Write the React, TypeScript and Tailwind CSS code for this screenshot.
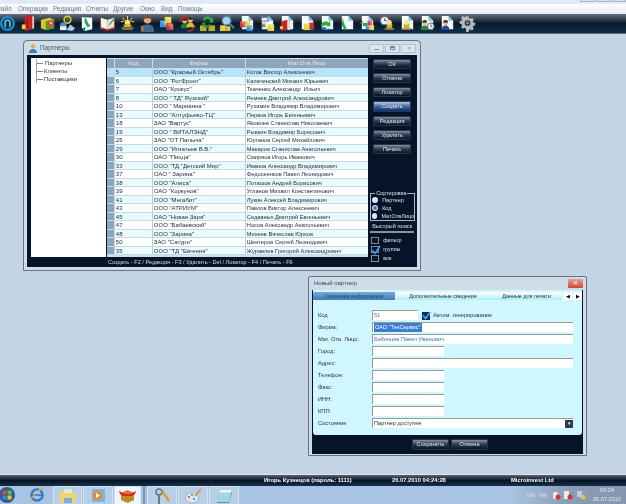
import React from "react";

const rows: [string, string, string][] = [
  ["5", 'ООО "Красный Октябрь"', "Котов Виктор Алексеевич"],
  ["6", 'ООО "РотФронт"', "Калачинский Михаил Юрьевич"],
  ["7", 'ОАО "Крокус"', "Ткаченко Александр  Ильич"],
  ["8", 'ООО " ТД" Яузский"', "Ремнев Дмитрий Александрович"],
  ["10", 'ООО " Марианна "', "Рухамин Владимир Владимирович"],
  ["13", 'ООО "Алтуфьево-ТЦ"', "Первов Игорь Евгеньевич"],
  ["18", 'ЗАО "Вартус"', "Яковлев Станислав Николаевич"],
  ["19", 'ООО " ВИТАЛЭНД"', "Рывкин Владимир Борисович"],
  ["25", 'ЗАО "ОТ Палыча"', "Юрганов Сергей Михайлович"],
  ["29", 'ООО "Игнатьев В.В."', "Макаров Станислав Анатольевич"],
  ["30", 'ОАО "Пицца"', "Смирнов Игорь Иванович"],
  ["33", 'ООО "ТД "Детский Мир"', "Иванов Александр Владимирович"],
  ["37", 'ОАО " Зарина"', "Федосеенков Павел Леонидович"],
  ["38", 'ООО "Алиса"', "Поташов Андрей Борисович"],
  ["39", 'ОАО "Коркунов"', "Угланов Михаил Константинович"],
  ["41", 'ООО "Мегабит"', "Лукин Алексей Владимирович"],
  ["43", 'ООО "АТРИУМ"', "Павлов Виктор Алексеевич"],
  ["45", 'ОАО "Новая Заря"', "Седавных Дмитрий Евгеньевич"],
  ["47", 'ООО "Бабаевский"', "Носов Александр Анатольевич"],
  ["48", 'ООО "Зарина"', "Михеев Вячеслав Юрков"],
  ["50", 'ЗАО "Сатурн"', "Шентеров Сергей Леонидович"],
  ["35", 'ООО "ТД "Евгения"', "Журавлев Григорий Александрович"],
];

const Page = () => (
  <g>
    <path d="M3 1h7l5 5v9H3z" fill="#f4fafd" />
    <path d="M10 1l5 5h-5z" fill="#7cc4e8" />
  </g>
);
const Cube = ({ x, y, c = "#f2d23a", s = 6 }: { x: number; y: number; c?: string; s?: number }) => (
  <g>
    <rect x={x} y={y} width={s} height={s} fill={c} />
    <path d={`M${x} ${y}h${s}v${s}z`} fill="#fff" opacity="0.28" />
  </g>
);
const Person = ({ x, y, c = "#1f7a3a" }: { x: number; y: number; c?: string }) => (
  <g>
    <path d={`M${x - 4} ${y + 10}c0-4 2-5 4-5s4 1 4 5z`} fill={c} />
    <circle cx={x} cy={y + 2.5} r="2.6" fill="#e8b48a" />
    <path d={`M${x - 2.6} ${y + 2}a2.6 2.6 0 0 1 5.2 0z`} fill="#3a2a1a" />
  </g>
);
const Lamp = ({ x, y }: { x: number; y: number }) => (
  <g>
    <path d={`M${x - 6} ${y + 8}h12l-2 2h-8z`} fill="#9a7c3c" />
    <rect x={x - 3} y={y + 3} width="6" height="5" fill="#c9b23a" />
    <circle cx={x} cy={y + 2} r="2.6" fill="#f4e58a" />
  </g>
);
const Arrow = ({ x, y, c = "#1fae3c" }: { x: number; y: number; c?: string }) => (
  <path d={`M${x} ${y + 4}l4-4v2.4h5v3.2h-5V8z`} fill={c} />
);

const icons: React.ReactNode[] = [
  <g>
    <circle cx="9" cy="9" r="8" fill="#1b8fc4" />
    <circle cx="9" cy="9" r="5.6" fill="#0a3450" />
    <path d="M6.5 13V8a2.5 2.5 0 0 1 5 0v5" fill="none" stroke="#7fd4f4" strokeWidth="1.4" />
  </g>,
  <g>
    <path d="M6 1l8-1v15l-8 2z" fill="#c8222a" />
    <path d="M14 1l2 1v12l-2 1z" fill="#eecdb8" />
    <rect x="3" y="10" width="4" height="5" fill="#e8d020" />
    <rect x="8" y="4" width="1" height="10" fill="#7c1018" />
  </g>,
  <g>
    <path d="M2 5l9-2 5 2v9l-9 2-5-2z" fill="#d6c62a" />
    <path d="M7 7l9-2v9l-9 2z" fill="#5f9a1c" />
    <rect x="10" y="6" width="5" height="6" fill="#e8474a" />
    <rect x="11.5" y="7.5" width="2" height="2" fill="#f4e0d8" />
  </g>,
  <g>
    <circle cx="9" cy="5" r="3.6" fill="none" stroke="#d6c82a" strokeWidth="1.7" />
    <circle cx="4.5" cy="11" r="3.4" fill="#5c8cc0" />
    <path d="M8 16l4-6 5 4-3 3z" fill="#a6d0e8" />
    <rect x="1" y="12" width="7" height="4" fill="#e8eef4" />
    <circle cx="9" cy="5" r="1.6" fill="#2f7a38" />
  </g>,
  <g>
    <path d="M3 2l11 1v12l-8 2-3-3z" fill="#f4fafd" />
    <path d="M6 1l4 8 2 3-3 1-3-5z" fill="#27a84a" />
    <path d="M3 14l3 3 1-4z" fill="#1a8a38" />
  </g>,
  <g>
    <path d="M1 4l8 2 8-2v11l-8 2-8-2z" fill="#a82a26" />
    <path d="M2 3l7 2v10l-7-2z" fill="#f2f2e8" />
    <path d="M9 5l7-2v10l-7 2z" fill="#e4e8dc" />
    <path d="M11 9l5-6 1 1-5 6-2 1z" fill="#2fae48" />
  </g>,
  <g>
    <path d="M4 3l2 3M9 1v4M14 3l-2 3M2 7h3M13 7h3" stroke="#f4e460" strokeWidth="1" />
    <circle cx="9" cy="8" r="3" fill="#f6e774" />
    <rect x="5" y="10" width="8" height="3" fill="#c9b03a" />
    <path d="M2 13h14l-2 3H4z" fill="#8a7038" />
  </g>,
  <g>
    <path d="M2 18c0-7 3-8 7-8s7 1 7 8z" fill="#47688c" />
    <circle cx="9" cy="5" r="4" fill="#e4aa7c" />
    <path d="M5 5a4 4 0 0 1 8 0c-2-2-6-2-8 0z" fill="#6a4a24" />
    <path d="M2 12l3-1v6H2z" fill="#a07840" />
  </g>,
  <g>
    <Cube x={1} y={6} c="#3a8fd8" s={7} />
    <Cube x={6} y={2} c="#e8d23a" s={7} />
    <Cube x={8} y={9} c="#d83a38" s={7} />
  </g>,
  <g>
    <path d="M1 7a8 8 0 0 1 8-5M17 11a8 8 0 0 1-8 6" fill="none" stroke="#c8252a" strokeWidth="1.8" />
    <Person x={6} y={4} c="#2d7a34" />
    <Person x={12} y={3} c="#d4c232" />
  </g>,
  <g>
    <rect x="1" y="11" width="7" height="6" fill="#c4ac2a" />
    <rect x="10" y="11" width="7" height="6" fill="#c4ac2a" />
    <path d="M4 5a5 5 0 0 1 9-1l2-1v5h-5l2-1a3 3 0 0 0-6 0z" fill="#28b83c" />
    <path d="M3 8h5l-2 1.5a3 3 0 0 0 5 0l2 1a5 5 0 0 1-9 .5z" fill="#1c9a34" />
  </g>,
  <g>
    <circle cx="8" cy="6" r="4.6" fill="#a8d4ee" stroke="#5a86a8" strokeWidth="1.5" />
    <path d="M11 9l5 5" stroke="#4a7ea6" strokeWidth="2" />
    <Cube x={1} y={11} c="#e2cb2a" s={6} />
    <Cube x={7} y={12} c="#d8b428" s={5} />
  </g>,
  <g>
    <Page />
    <Cube x={1} y={7} c="#d83a38" s={6} />
    <Cube x={7} y={6} c="#e8d23a" s={5} />
    <Cube x={8} y={11} c="#3a8fd8" s={6} />
  </g>,
  <g>
    <Page />
    <rect x="2" y="1" width="8" height="6" fill="#5a6e8c" />
    <rect x="3" y="3" width="6" height="3" fill="#e8eef4" />
    <Cube x={9} y={10} c="#e8d23a" s={7} />
    <Cube x={3} y={9} c="#6a8f3a" s={4} />
  </g>,
  <g>
    <Page />
    <path d="M2 7l7-2v11l-7 1z" fill="#c8222a" />
    <path d="M9 5l3 1v10l-3-.5z" fill="#eed6c8" />
    <Cube x={1} y={12} c="#e8d23a" s={3} />
  </g>,
  <g>
    <Page />
    <Cube x={5} y={9} c="#e8d23a" s={7} />
    <rect x="11" y="8" width="5" height="7" fill="#c8323a" />
  </g>,
  <g>
    <Page />
    <path d="M2 11a5 5 0 0 1 8-3l2-1v5H7l2-1a3 3 0 0 0-4 1z" fill="#22b23c" />
    <path d="M3 13h5l-1 1c1 1 2 1 3 0l1 1c-2 2-4 2-6 0l-2 1z" fill="#1c74c0" />
  </g>,
  <g>
    <Page />
    <path d="M4 3l2 7 2 4-2 2-3-5z" fill="#2aae4a" />
    <path d="M5 5l2 7" stroke="#e8f8e8" strokeWidth="0.8" />
  </g>,
  <g>
    <Page />
    <Arrow x={0} y={6} />
    <Cube x={9} y={6} c="#d83a38" s={5} />
    <Cube x={11} y={11} c="#e8d23a" s={5} />
    <Cube x={7} y={11} c="#3a8fd8" s={4} />
  </g>,
  <g>
    <circle cx="6" cy="6" r="4.5" fill="#eaf4fb" stroke="#3a74b8" strokeWidth="1.4" />
    <path d="M6 3.5V6h2" stroke="#222" strokeWidth="0.8" fill="none" />
    <circle cx="2" cy="1.6" r="1.3" fill="#d8322e" />
    <circle cx="10" cy="1.6" r="1.3" fill="#d8322e" />
    <Lamp x={11} y={6} />
  </g>,
  <g>
    <Page />
    <Lamp x={8} y={6} />
  </g>,
  <g>
    <Page />
    <Person x={6} y={6} c="#1f8a3a" />
    <circle cx="12.5" cy="12" r="3.6" fill="#eef4f8" stroke="#53606c" strokeWidth="1" />
    <path d="M12.5 10v2h1.6" stroke="#222" strokeWidth="0.7" fill="none" />
  </g>,
  <g>
    <Page />
    <Person x={7} y={6} c="#1c4c98" />
  </g>,
  <g>
    <path
      d="M7.5 1h3l.5 2.2 1.7.7 2-1.2 2 2-1.2 2 .7 1.7 2.2.5v3l-2.2.5-.7 1.7 1.2 2-2 2-2-1.2-1.7.7-.5 2.2h-3L7 15.6l-1.7-.7-2 1.2-2-2 1.2-2-.7-1.7L-.4 9.9v-3L1.8 6.4l.7-1.7-1.2-2 2-2 2 1.2L7 1.2z"
      transform="translate(1 .5) scale(.88)"
      fill="#b4bac0"
    />
    <circle cx="9" cy="8.5" r="3" fill="#20303e" />
    <circle cx="9" cy="8.5" r="1.5" fill="#8c949c" />
  </g>,
];

function Menu() {
  return (
    <div className="flex h-[10px] shrink-0 items-center gap-[7px] bg-gradient-to-b from-white to-[#e8ebf8] text-[6.4px] text-[#69788a]">
      <span className="-ml-[4px] w-[15px]">Файл</span>
      <span className="w-[28px]">Операции</span>
      <span className="w-[26px]">Редакция</span>
      <span className="w-[20px]">Отчеты</span>
      <span className="w-[20px]">Другие</span>
      <span className="w-[14px]">Окно</span>
      <span className="w-[10px]">Вид</span>
      <span>Помощь</span>
    </div>
  );
}

function Toolbar() {
  return (
    <div className="-ml-[3px] flex h-[20px] shrink-0 items-center overflow-hidden border-b border-[#5d6d80] bg-gradient-to-b from-[#67747f] via-[#0c1826] to-[#0c3050]">
      {icons.map((ic, i) => (
        <div key={i} className="flex h-[20px] w-[20px] shrink-0 items-center justify-center">
          <svg width="17" height="17" viewBox="0 0 18 18">
            {ic}
          </svg>
        </div>
      ))}
    </div>
  );
}

function DarkButton({ label, active = false, w = "w-[38px]", h = "h-[10px]" }: { label: string; active?: boolean; w?: string; h?: string }) {
  return (
    <div
      className={`${w} ${h} flex items-center justify-center rounded-[1px] border border-[#26354a] text-[5.6px] text-[#dbe4ea] ${
        active ? "bg-gradient-to-b from-[#b8cce0] via-[#3a68a8] to-[#143066]" : "bg-gradient-to-b from-[#8692a0] via-[#2e3a4c] to-[#0c1528]"
      }`}
    >
      {label}
    </div>
  );
}

function WinButton({ kind }: { kind: number }) {
  return (
    <div className="flex h-[9px] w-[15px] items-center justify-center rounded-[1px] border border-[#b0bfcd] bg-[#dbe6f0]">
      {kind === 0 && <div className="mt-[2px] h-[1px] w-[5px] bg-[#7c8894]" />}
      {kind === 1 && <div className="h-[4px] w-[5px] border border-t-2 border-[#7c8894]" />}
      {kind === 2 && <div className="text-[5px] leading-none text-[#7c8894]">✕</div>}
    </div>
  );
}

function Check({ on = false }: { on?: boolean }) {
  return (
    <div className="relative h-[7px] w-[8px] border border-[#7f8a96] bg-[#0a1526]">
      {on && (
        <svg className="absolute -left-[1px] -top-[2px]" width="10" height="10" viewBox="0 0 10 10">
          <path d="M1.5 5.5l2.5 3L9 1" fill="none" stroke="#3fa0f0" strokeWidth="1.6" />
        </svg>
      )}
    </div>
  );
}

function Radio({ label, on = false }: { label: string; on?: boolean }) {
  return (
    <div className="flex h-[8px] items-center gap-[4px]">
      <div className="flex h-[6px] w-[6px] items-center justify-center rounded-full bg-[#dce8f0]">
        {on && <div className="h-[4px] w-[4px] rounded-full bg-[#2a7cc8]" />}
      </div>
      <span className="text-[5.5px] text-[#d8e2ea]">{label}</span>
    </div>
  );
}

function Partners() {
  return (
    <div className="absolute left-[23px] top-[6px] flex h-[231px] w-[398px] flex-col rounded-t-[4px] border border-[#67737e] bg-[#cfdde9] px-[3px] pb-[3px]">
      <div className="flex h-[14px] shrink-0 items-center">
        <svg width="8" height="9" viewBox="0 0 8 9" className="ml-[2px] mr-[3px]">
          <path d="M0 9c0-3 2-4 4-4s4 1 4 4z" fill="#3e7ac0" />
          <circle cx="4" cy="2.5" r="2.2" fill="#e4aa60" />
        </svg>
        <span className="text-[6.4px] text-[#4a5866]">Партнеры</span>
        <div className="ml-auto mr-[1px] flex gap-[1px]">
          <WinButton kind={0} />
          <WinButton kind={1} />
          <WinButton kind={2} />
        </div>
      </div>
      <div className="flex min-h-0 flex-1 flex-col bg-[#06142a]">
        <div className="flex h-[202px] shrink-0 pt-[3px]">
          <div className="ml-[4px] h-[199px] w-[75px] bg-white pl-[5px] pt-[1px] text-[5.8px] leading-[8px] text-[#2a2f36]">
            <div className="flex items-center border-l border-[#9aa4ac]"><span className="mr-[2px] h-[1px] w-[6px] bg-[#7d8790]" />Партнеры</div>
            <div className="flex items-center border-l border-[#9aa4ac]"><span className="mr-[1px] h-[1px] w-[6px] bg-[#7d8790]" />Клиенты</div>
            <div className="flex items-center border-l border-[#9aa4ac]"><span className="mr-[1px] h-[1px] w-[6px] bg-[#7d8790]" />Поставщики</div>
          </div>
          <div className="ml-[1px] h-[199px] w-[262px] overflow-hidden bg-[#d5dde4] text-[6px] text-[#24303c]">
            <div className="mt-[1px] flex h-[9px] bg-[#8fa6ba] text-[#dfe8ef]">
              <div className="w-[8px] border-r border-[#cdd8e2]" />
              <div className="w-[38px] border-r border-[#cdd8e2] text-center leading-[9px]">Код</div>
              <div className="w-[93px] border-r border-[#cdd8e2] text-center leading-[9px]">Фирма</div>
              <div className="flex-1 text-center leading-[9px]">Мат.Отв.Лицо</div>
            </div>
            {rows.map((r, i) => (
              <div
                key={r[0]}
                className={`flex h-[8.5px] border-b border-[#c3dbe6] leading-[8px] ${
                  i === 0 ? "bg-[#b8e4fb]" : i % 2 === 1 ? "bg-[#e8fbff]" : "bg-white"
                }`}
              >
                <div className={`w-[8px] shrink-0 border-r border-[#c8d6e0] ${i === 0 ? "bg-[#b8e4fb]" : "bg-[#8fa6ba]"}`} />
                <div className="w-[38px] shrink-0 border-r border-[#b6cdd8] pl-[1px]">{r[0]}</div>
                <div className="w-[93px] shrink-0 whitespace-pre border-r border-[#b6cdd8] pl-[1px]">{r[1]}</div>
                <div className="flex-1 whitespace-pre pl-[1px] text-[5.7px]">{r[2]}</div>
              </div>
            ))}
          </div>
          <div className="ml-[2px] flex w-[47px] flex-col">
            <div className="ml-[3px] flex flex-col gap-[4px] pt-[1px]">
              <DarkButton label="ОК" />
              <DarkButton label="Отмена" />
              <DarkButton label="Локатор" />
              <DarkButton label="Создать" active h="h-[11px]" />
              <DarkButton label="Редакция" />
              <DarkButton label="Удалить" />
              <DarkButton label="Печать" />
            </div>
            <div className="relative mt-[39px] flex h-[29px] w-[45px] flex-col justify-center border border-[#aab6c2] pl-[1px] pt-[2px]">
              <span className="absolute -top-[4px] left-[4px] bg-[#06142a] px-[1px] text-[5.5px] leading-[7px] text-[#d8e2ea]">Сортировка</span>
              <Radio label="Партнер" />
              <Radio label="Код" on />
              <Radio label="МатОтвЛицо" />
            </div>
            <div className="mt-[1px] pl-[2px] text-[5.7px] leading-[9px] text-[#d8e2ea]">Быстрый поиск</div>
            <div className="h-[8px] w-[44px] border border-[#8794a2] bg-[#0a1526]" />
            <div className="mt-[3px] flex flex-col gap-[1px] pl-[1px] text-[5.4px] text-[#d8e2ea]">
              <div className="flex h-[8px] items-center gap-[4px]"><Check /><span>фильтр</span></div>
              <div className="flex h-[8px] items-center gap-[4px]"><Check on /><span>группы</span></div>
              <div className="flex h-[8px] items-center gap-[4px]"><Check /><span>все</span></div>
            </div>
          </div>
        </div>
        <div className="flex flex-1 items-center pl-[81px] text-[5.6px] text-[#d4dee6]">
          Создать - F2 / Редакция - F3 / Удалить - Del / Локатор - F4 / Печать - F6
        </div>
      </div>
    </div>
  );
}

function Field({ label, w, children }: { label: string; w: string; children?: React.ReactNode }) {
  return (
    <div className="flex h-[12px] items-center text-[5.7px] text-[#2c343c]">
      <div className="w-[54px] shrink-0">{label}</div>
      <div className={`${w} relative flex h-[10px] items-center border-l border-t border-[#9a9a92] bg-white pl-[1px] text-[5.6px]`}>{children}</div>
    </div>
  );
}

function Dialog() {
  return (
    <div className="absolute left-[308px] top-[242px] flex h-[180px] w-[279px] flex-col rounded-t-[2px] border border-[#67737e] bg-[#cfdde9] px-[3px] pb-[1px]">
      <div className="flex h-[13px] shrink-0 items-center pl-[2px]">
        <span className="text-[6px] text-[#3a4652]">Новый партнер</span>
        <div className="ml-auto flex h-[9px] w-[15px] items-center justify-center rounded-[1px] bg-gradient-to-b from-[#e8a090] to-[#c84830] text-[6px] text-white">✕</div>
      </div>
      <div className="flex min-h-0 flex-1 flex-col bg-[#06142a]">
        <div className="mx-[1px] flex h-[145px] shrink-0 flex-col rounded-b-[3px] bg-[#d0f6ff] pt-[2px]">
          <div className="flex h-[8px] text-center text-[5.4px] leading-[8px] text-[#22303a]">
            <div className="w-[82px] rounded-tl-[2px] bg-gradient-to-b from-[#78a8d8] to-[#3f7cc0] text-[#1e4468]">Основная информация</div>
            <div className="w-[97px] bg-gradient-to-b from-white to-[#a8f0fa]">Дополнительные сведения</div>
            <div className="w-[71px] bg-gradient-to-b from-white to-[#a8f0fa]">Данные для печати</div>
            <div className="ml-[1px] flex h-[8px] gap-[1px]">
              <div className="flex w-[9px] items-center justify-center bg-white text-[5px] text-black">◀</div>
              <div className="flex w-[9px] items-center justify-center bg-white text-[5px] text-black">▶</div>
            </div>
          </div>
          <div className="pl-[5px] pt-[9px]">
            <div className="flex h-[12px] items-center text-[5.7px] text-[#2c343c]">
              <div className="w-[54px] shrink-0">Код</div>
              <div className="flex h-[10px] w-[46px] items-center border-l border-t border-[#9a9a92] bg-white pl-[1px] text-[5.6px] text-[#4d78b4]">51</div>
              <svg width="9" height="9" viewBox="0 0 9 9" className="ml-[4px]">
                <rect x="0" y="1" width="8" height="8" fill="#0e2c5c" />
                <path d="M1 4.5l2.5 3L8.5 1" fill="none" stroke="#4ab0f4" strokeWidth="1.5" />
              </svg>
              <span className="ml-[2px]">Автом. генерирование</span>
            </div>
            <Field label="Фирма:" w="w-[201px]">
              <span className="bg-[#3a7cd0] px-[1px] text-white">ОАО "ТекСервис"</span>
            </Field>
            <Field label="Мат. Отв. Лицо:" w="w-[201px]">
              <span className="text-[#4d78b4]">Бабенцев Павел Иванович</span>
            </Field>
            <Field label="Город:" w="w-[72px]" />
            <Field label="Адрес:" w="w-[201px]" />
            <Field label="Телефон:" w="w-[72px]" />
            <Field label="Факс:" w="w-[72px]" />
            <Field label="ИНН:" w="w-[72px]" />
            <Field label="КПП:" w="w-[72px]" />
            <Field label="Состояние" w="w-[201px]">
              <span>Партнер доступен</span>
              <div className="absolute right-0 top-[1px] flex h-[8px] w-[8px] items-center justify-center bg-[#2e3c4c] text-[5px] text-white">▾</div>
            </Field>
          </div>
        </div>
        <div className="flex flex-1 items-center justify-center gap-[2px] pl-[5px]">
          <DarkButton label="Сохранить" w="w-[37px]" h="h-[11px]" />
          <DarkButton label="Отмена" w="w-[37px]" h="h-[11px]" />
        </div>
      </div>
    </div>
  );
}

function TaskTile({ w, active, children }: { w: string; active?: boolean; children: React.ReactNode }) {
  return (
    <div className={`${w} flex h-[18px] shrink-0 items-center justify-center rounded-t-[2px] border-x border-t border-[#d4e2f0] ${active ? "bg-[#eef4fb]" : "bg-[#b8cfe8]"}`}>
      {children}
    </div>
  );
}

function Taskbar() {
  return (
    <div className="relative flex h-[18px] shrink-0 items-center bg-[#a9c3e2]">
      <div className="flex h-[18px] w-[53px] shrink-0 items-center">
        <svg width="17" height="18" viewBox="0 0 17 18" className="-ml-[1px]">
          <circle cx="8" cy="9" r="8" fill="#2c5f92" />
          <rect x="3.5" y="4.5" width="4" height="4" fill="#e4442c" />
          <rect x="8.5" y="4.5" width="4" height="4" fill="#6cbc2e" />
          <rect x="3.5" y="9.5" width="4" height="4" fill="#2c8ce4" />
          <rect x="8.5" y="9.5" width="4" height="4" fill="#f4c61e" />
        </svg>
        <svg width="17" height="16" viewBox="0 0 17 16" className="ml-[13px]">
          <circle cx="8" cy="8" r="5.6" fill="none" stroke="#2a7ad4" strokeWidth="2.4" />
          <path d="M3 8h10" stroke="#2a7ad4" strokeWidth="1.6" />
          <path d="M1 14C4 8 10 2 15 1" fill="none" stroke="#e8b038" strokeWidth="1.3" />
        </svg>
      </div>
      <div className="flex gap-[1px]">
        <TaskTile w="w-[29px]">
          <svg width="18" height="16" viewBox="0 0 18 16">
            <path d="M1 3h6l1 2h9v10H1z" fill="#f2d46c" />
            <rect x="5" y="1" width="8" height="4" fill="#e4ecd8" />
            <rect x="5" y="10" width="8" height="5" fill="#78b0d8" />
          </svg>
        </TaskTile>
        <TaskTile w="w-[30px]">
          <svg width="15" height="15" viewBox="0 0 15 15">
            <rect x="1" y="1" width="13" height="13" rx="1" fill="#78b4e4" />
            <circle cx="6.5" cy="7.5" r="4.5" fill="#f08a18" />
            <path d="M5 5l4 2.5L5 10z" fill="#fff" />
          </svg>
        </TaskTile>
        <TaskTile w="w-[27px]" active>
          <svg width="17" height="15" viewBox="0 0 17 15">
            <path d="M2 5l6.5-3L15 5v7l-6.5 3L2 12z" fill="#c08a28" />
            <path d="M0 3l6 3-2 2-3-2zM17 3l-6 3 2 2 3-2z" fill="#e0202c" />
            <path d="M4 6h9v2H4z" fill="#e0202c" />
          </svg>
        </TaskTile>
        <div className="mx-[1px] h-[18px] w-[2px] border-x border-[#7e94ac]" />
        <TaskTile w="w-[30px]">
          <svg width="17" height="16" viewBox="0 0 17 16">
            <circle cx="5" cy="4" r="3" fill="none" stroke="#6e7880" strokeWidth="1.6" />
            <path d="M5 7v9" stroke="#6e7880" strokeWidth="2" />
            <path d="M8 3l7 10" stroke="#d89a28" strokeWidth="2.2" />
          </svg>
        </TaskTile>
        <TaskTile w="w-[30px]">
          <svg width="17" height="16" viewBox="0 0 17 16">
            <ellipse cx="7" cy="10" rx="6.5" ry="5" fill="#dfe8f2" stroke="#8a9cb0" strokeWidth="0.6" />
            <circle cx="4" cy="9" r="1" fill="#e03c30" />
            <circle cx="7" cy="7" r="1" fill="#3ca838" />
            <circle cx="9" cy="11" r="1" fill="#2c7ad4" />
            <path d="M10 8l6-7" stroke="#d8962c" strokeWidth="1.6" />
          </svg>
        </TaskTile>
        <TaskTile w="w-[30px]">
          <svg width="17" height="16" viewBox="0 0 17 16">
            <path d="M4 2h12l-3 12H1z" fill="#9cd8e8" />
            <path d="M4 2h12l-.6 2.5H3.3z" fill="#f2f4ee" />
            <path d="M1 14h12l3-12v3l-3 10H1z" fill="#6c8a98" />
          </svg>
        </TaskTile>
      </div>
      <div className="absolute right-0 top-0 flex h-[18px] w-[116px] items-center bg-gradient-to-r from-[#a9c3e2] via-[#8b9db6] to-[#8597b0] pl-[17px] text-[5.6px] text-[#dfe6ee]">
        <span>EN</span>
        <svg width="50" height="10" viewBox="0 0 50 10" className="ml-[3px] shrink-0">
          <rect x="1" y="3" width="8" height="4" rx="1" fill="#b6c2ce" />
          <rect x="15" y="2" width="5" height="7" rx="2" fill="#e8eef4" />
          <circle cx="20" cy="7" r="2.5" fill="#d8342c" />
          <rect x="26" y="1" width="5" height="8" fill="#e8eef4" />
          <circle cx="32" cy="7" r="2.5" fill="#d8342c" />
          <rect x="39" y="1" width="5" height="6" fill="#c4ccd4" />
          <path d="M43 9l2.5-5 2.5 5z" fill="#f0d018" />
        </svg>
        <div className="ml-auto mr-[5px] flex flex-col items-center text-[5.6px] leading-[9px] text-[#e4eaf2]">
          <span>04:24</span>
          <span>26.07.2010</span>
        </div>
      </div>
    </div>
  );
}

export default function App() {
  return (
    <div className="relative flex h-[504px] w-[626px] flex-col overflow-hidden bg-[#c3d4e5] blur-[0.3px] [font-family:'Liberation_Sans',Arial,sans-serif]">
      <div className="relative h-[4px] shrink-0 bg-[#e2eaf6]">
        <div className="absolute right-0 -top-[7px] flex gap-[1px]">
          <div className="h-[9px] w-[16px] border border-[#a9b4c0] bg-[#d8e2ee]" />
          <div className="h-[9px] w-[16px] border border-[#a9b4c0] bg-[#d8e2ee]" />
          <div className="h-[9px] w-[12px] border border-[#a9b4c0] bg-[#d8e2ee]" />
        </div>
      </div>
      <Menu />
      <Toolbar />
      <div className="relative min-h-0 flex-1">
        <Partners />
        <Dialog />
      </div>
      <div className="flex h-[12px] shrink-0 items-center border-t border-[#dce6f0] bg-gradient-to-b from-[#5a6672] via-[#081422] to-[#123250] text-[5.8px] font-bold text-white">
        <span className="ml-[264px] w-[128px]">Игорь Кузнецов (пароль: 1111)</span>
        <span className="w-[119px]">26.07.2010 04:24:28</span>
        <span>Microinvest Ltd</span>
      </div>
      <Taskbar />
    </div>
  );
}
